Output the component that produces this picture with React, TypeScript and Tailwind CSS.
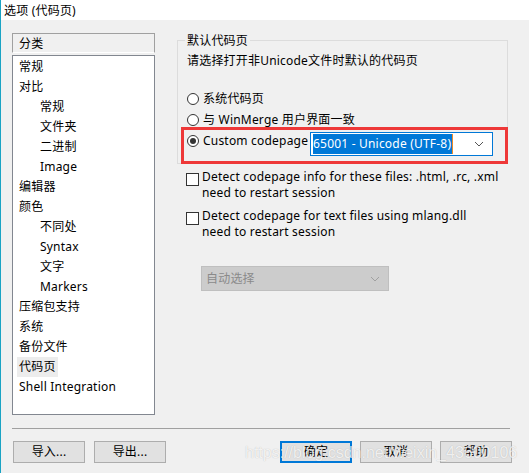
import React from "react";

const font = { fontFamily: '"Noto Sans", "Noto Sans CJK SC", sans-serif' };

const categories: { label: string; indent?: boolean; active?: boolean }[] = [
  { label: "常规" },
  { label: "对比" },
  { label: "常规", indent: true },
  { label: "文件夹", indent: true },
  { label: "二进制", indent: true },
  { label: "Image", indent: true },
  { label: "编辑器" },
  { label: "颜色" },
  { label: "不同处", indent: true },
  { label: "Syntax", indent: true },
  { label: "文字", indent: true },
  { label: "Markers", indent: true },
  { label: "压缩包支持" },
  { label: "系统" },
  { label: "备份文件" },
  { label: "代码页", active: true },
  { label: "Shell Integration" },
];

function Chevron({ color }: { color: string }) {
  return (
    <svg width="10" height="6" viewBox="0 0 10 6" className="shrink-0">
      <polyline points="1,1 5,5 9,1" fill="none" stroke={color} strokeWidth="1" />
    </svg>
  );
}

function Radio({ checked, label }: { checked?: boolean; label: string }) {
  return (
    <div className="flex items-center h-[21px]">
      <span className="w-[12px] h-[12px] rounded-full border border-[#333] bg-white flex items-center justify-center shrink-0">
        {checked && <span className="w-[6px] h-[6px] rounded-full bg-[#333]" />}
      </span>
      <span className="ml-[4px] whitespace-nowrap">{label}</span>
    </div>
  );
}

function Check({ line1, line2 }: { line1: string; line2: string }) {
  return (
    <div className="flex items-start">
      <span className="w-[13px] h-[13px] border border-[#333] bg-white mt-[4px] shrink-0" />
      <div className="ml-[3px] leading-[16px] whitespace-nowrap">
        <div>{line1}</div>
        <div>{line2}</div>
      </div>
    </div>
  );
}

function Btn({ label, primary }: { label: string; primary?: boolean }) {
  return (
    <button
      className={
        "h-[22px] w-[72px] bg-[#e1e1e1] flex items-center justify-center text-[12px] text-black " +
        (primary ? "border-2 border-[#0078d7]" : "border border-[#adadad]")
      }
    >
      {label}
    </button>
  );
}

export default function App() {
  return (
    <div
      className="relative w-[529px] h-[473px] bg-[#f0f0f0] border-l border-[#1aa3c4] overflow-hidden text-[12px] tracking-[0.2px] text-black"
      style={font}
    >
      {/* Title */}
      <div className="h-[20px] bg-white flex items-center pl-[3px] pt-[1px] text-[12px]">选项 (代码页)</div>

      <div className="flex">
        {/* Categories */}
        <div className="pl-[11px] pt-[13px] w-[154px] shrink-0">
          <div className="h-[20px] border border-[#a0a0a0] border-b-white bg-[#f0f0f0] flex items-center pl-[6px] pt-[1px]">
            分类
          </div>
          <div className="mt-[2px] h-[360px] border border-[#828790] bg-white pt-px w-[143px]">
            {categories.map((c, i) => (
              <div key={i} className={"h-[20px] flex items-center " + (c.indent ? "pl-[25px]" : "pl-[4px]")}>
                <span className={"px-[2px] h-[20px] flex items-center " + (c.active ? "bg-[#ececec]" : "")}>
                  {c.label}
                </span>
              </div>
            ))}
          </div>
        </div>

        {/* Options */}
        <div className="ml-[22px] pt-[20px] w-[331px]">
          <div className="relative border border-[#dcdcdc] h-[124px] pl-[9px] pt-[12px]">
            <span className="absolute -top-[8px] left-[7px] px-[2px] bg-[#f0f0f0] leading-[16px]">默认代码页</span>
            <div className="leading-[16px]">请选择打开非Unicode文件时默认的代码页</div>
            <div className="mt-[19px]">
              <Radio label="系统代码页" />
              <Radio label="与 WinMerge 用户界面一致" />
              <div className="flex items-center h-[22px]">
                <div className="w-[121px] overflow-hidden shrink-0">
                  <Radio checked label="Custom codepage" />
                </div>
                <div className="ml-[2px] w-[183px] h-[24px] mt-[6px] border border-[#0078d7] bg-white flex items-center pl-[2px] pr-[8px]">
                  <span className="bg-[#0078d7] text-white h-[20px] flex items-center pr-[1px] border-r border-[#f08a24]">
                    65001 - Unicode (UTF-8)
                  </span>
                  <span className="flex-1" />
                  <Chevron color="#555" />
                </div>
              </div>
            </div>
            {/* highlight annotation */}
            <div className="absolute left-[3px] -right-[1px] -bottom-[1px] h-[37px] border-[3px] border-[#ee3838] pointer-events-none" />
          </div>

          <div className="pl-[9px] mt-[5px]">
            <Check line1="Detect codepage info for these files: .html, .rc, .xml" line2="need to restart session" />
            <div className="mt-[7px]">
              <Check line1="Detect codepage for text files using mlang.dll" line2="need to restart session" />
            </div>
            <div className="ml-[15px] mt-[26px] w-[188px] h-[25px] bg-[#cccccc] border border-[#bfbfbf] flex items-center pl-[4px] pr-[8px] text-[#8a8a8a]">
              <span>自动选择</span>
              <span className="flex-1" />
              <Chevron color="#a0a0a0" />
            </div>
          </div>
        </div>
      </div>

      {/* Separator */}
      <div className="ml-[11px] mt-[13px] w-[498px] h-px bg-[#a0a0a0]" />

      {/* Buttons */}
      <div className="flex items-center mt-[12px] pl-[12px] pr-[17px]">
        <Btn label="导入..." />
        <div className="ml-[9px]">
          <Btn label="导出..." />
        </div>
        <div className="flex-1" />
        <Btn label="确定" primary />
        <div className="ml-[8px]">
          <Btn label="取消" />
        </div>
        <div className="ml-[8px]">
          <Btn label="帮助" />
        </div>
      </div>

      {/* watermark */}
      <div
        className="absolute left-[244px] top-[443px] text-[16px] leading-[20px] tracking-normal text-white/80 whitespace-nowrap pointer-events-none [text-shadow:0_0_1px_rgba(0,0,0,0.25)]"
        style={{ fontFamily: '"Liberation Sans", sans-serif' }}
      >
        https://blog.csdn.net/weixin_43600106
      </div>
    </div>
  );
}
